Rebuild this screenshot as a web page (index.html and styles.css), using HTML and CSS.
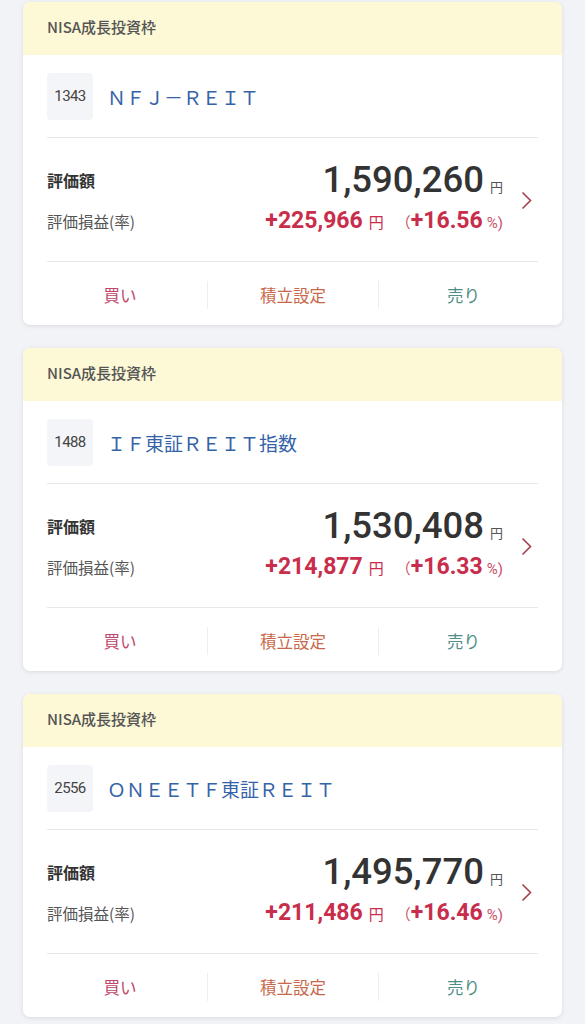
FILE: index.html
```html
<!DOCTYPE html>
<html>
<head>
<meta charset="UTF-8">
<title>保有銘柄</title>
<link rel="stylesheet" href="styles.css">
</head>
<body>

<div class="card">
  <div class="card-head">NISA成長投資枠</div>
  <div class="card-body">
    <div class="fund">
      <span class="code">1343</span>
      <span class="name">ＮＦＪ－ＲＥＩＴ</span>
    </div>
    <div class="summary">
      <div class="rows">
        <div class="row">
          <span class="label strong">評価額</span>
          <span class="value"><span class="big">1,590,260</span><span class="yen">円</span></span>
        </div>
        <div class="row">
          <span class="label">評価損益(率)</span>
          <span class="gain"><b>+225,966</b><span class="yen">円</span><span class="paren">（</span><b>+16.56</b><span class="pct">%</span><span class="paren">)</span></span>
        </div>
      </div>
      <div class="more">
        <svg width="11" height="19" viewBox="0 0 11 19"><polyline points="1.5,1.5 9.5,9.5 1.5,17.5" fill="none" stroke="#a3404c" stroke-width="1.6"/></svg>
      </div>
    </div>
    <div class="actions">
      <a class="buy">買い</a>
      <a class="plan">積立設定</a>
      <a class="sell">売り</a>
    </div>
  </div>
</div>

<div class="card">
  <div class="card-head">NISA成長投資枠</div>
  <div class="card-body">
    <div class="fund">
      <span class="code">1488</span>
      <span class="name">ＩＦ東証ＲＥＩＴ指数</span>
    </div>
    <div class="summary">
      <div class="rows">
        <div class="row">
          <span class="label strong">評価額</span>
          <span class="value"><span class="big">1,530,408</span><span class="yen">円</span></span>
        </div>
        <div class="row">
          <span class="label">評価損益(率)</span>
          <span class="gain"><b>+214,877</b><span class="yen">円</span><span class="paren">（</span><b>+16.33</b><span class="pct">%</span><span class="paren">)</span></span>
        </div>
      </div>
      <div class="more">
        <svg width="11" height="19" viewBox="0 0 11 19"><polyline points="1.5,1.5 9.5,9.5 1.5,17.5" fill="none" stroke="#a3404c" stroke-width="1.6"/></svg>
      </div>
    </div>
    <div class="actions">
      <a class="buy">買い</a>
      <a class="plan">積立設定</a>
      <a class="sell">売り</a>
    </div>
  </div>
</div>

<div class="card">
  <div class="card-head">NISA成長投資枠</div>
  <div class="card-body">
    <div class="fund">
      <span class="code">2556</span>
      <span class="name">ＯＮＥＥＴＦ東証ＲＥＩＴ</span>
    </div>
    <div class="summary">
      <div class="rows">
        <div class="row">
          <span class="label strong">評価額</span>
          <span class="value"><span class="big">1,495,770</span><span class="yen">円</span></span>
        </div>
        <div class="row">
          <span class="label">評価損益(率)</span>
          <span class="gain"><b>+211,486</b><span class="yen">円</span><span class="paren">（</span><b>+16.46</b><span class="pct">%</span><span class="paren">)</span></span>
        </div>
      </div>
      <div class="more">
        <svg width="11" height="19" viewBox="0 0 11 19"><polyline points="1.5,1.5 9.5,9.5 1.5,17.5" fill="none" stroke="#a3404c" stroke-width="1.6"/></svg>
      </div>
    </div>
    <div class="actions">
      <a class="buy">買い</a>
      <a class="plan">積立設定</a>
      <a class="sell">売り</a>
    </div>
  </div>
</div>

</body>
</html>
```

FILE: styles.css
```css
body {
  margin: 0;
  padding: 2px 23px 0;
  background-color: #f2f3f7;
  font-family: "Noto Sans CJK JP", sans-serif;
  color: #333;
}

.card {
  height: 323px;
  margin-bottom: 23px;
  background-color: #fff;
  border-radius: 7px;
  box-shadow: 0 1px 4px rgba(0, 0, 0, 0.1);
  overflow: hidden;
}

.card-head {
  height: 53px;
  padding-left: 24px;
  background-color: #fdf9d6;
  color: #555;
  font-size: 15px;
  font-weight: 500;
  line-height: 50px;
}

.card-body {
  padding: 0 24px;
}

.fund {
  display: flex;
  align-items: center;
  gap: 14px;
  padding: 18px 0 17px;
  border-bottom: 1px solid #e8e8ea;
}
.code {
  width: 46px;
  height: 47px;
  border-radius: 4px;
  background-color: #f4f5f8;
  color: #444;
  font-family: Roboto, sans-serif;
  font-size: 15px;
  letter-spacing: -0.6px;
  line-height: 47px;
  text-align: center;
}
.name {
  color: #3463a7;
  font-size: 19px;
}

.summary {
  display: flex;
  align-items: center;
  padding: 21px 0 20px;
  border-bottom: 1px solid #e8e8ea;
}
.rows {
  flex: 1;
}
.row {
  display: flex;
  align-items: center;
  justify-content: space-between;
  height: 41px;
}
.label {
  font-size: 15.5px;
  color: #555;
}
.label.strong {
  font-size: 16px;
  font-weight: 700;
  color: #333;
}
.value, .gain {
  display: flex;
  align-items: baseline;
  font-family: Roboto, "Noto Sans CJK JP", sans-serif;
}
.big {
  font-size: 36.5px;
  font-weight: 500;
  color: #333;
}
.yen {
  margin-left: 6px;
  font-family: "Noto Sans CJK JP", sans-serif;
  font-size: 13px;
  color: #555;
}
.gain {
  color: #c82d4b;
}
.gain b {
  font-size: 23px;
  font-weight: 700;
}
.gain .yen {
  font-size: 15px;
  color: #c82d4b;
}
.paren {
  margin-left: 12px;
  font-size: 15px;
  color: #c85068;
}
.paren:last-child {
  margin-left: 0;
}
.pct {
  margin-left: 4px;
  font-size: 15px;
  color: #c85068;
}
.more {
  width: 29px;
  display: flex;
  justify-content: flex-end;
  padding-right: 6px;
}

.actions {
  display: grid;
  grid-template-columns: 160px 1fr 160px;
  padding: 19px 0 16px;
}
.actions a {
  font-size: 16.5px;
  line-height: 28px;
  text-align: center;
}
.actions a + a {
  border-left: 1px solid #eeeef0;
}
.buy { color: #c0466a; padding-right: 14px; }
.plan { color: #c8684a; }
.sell { color: #4f8f86; padding-left: 10px; }
```
